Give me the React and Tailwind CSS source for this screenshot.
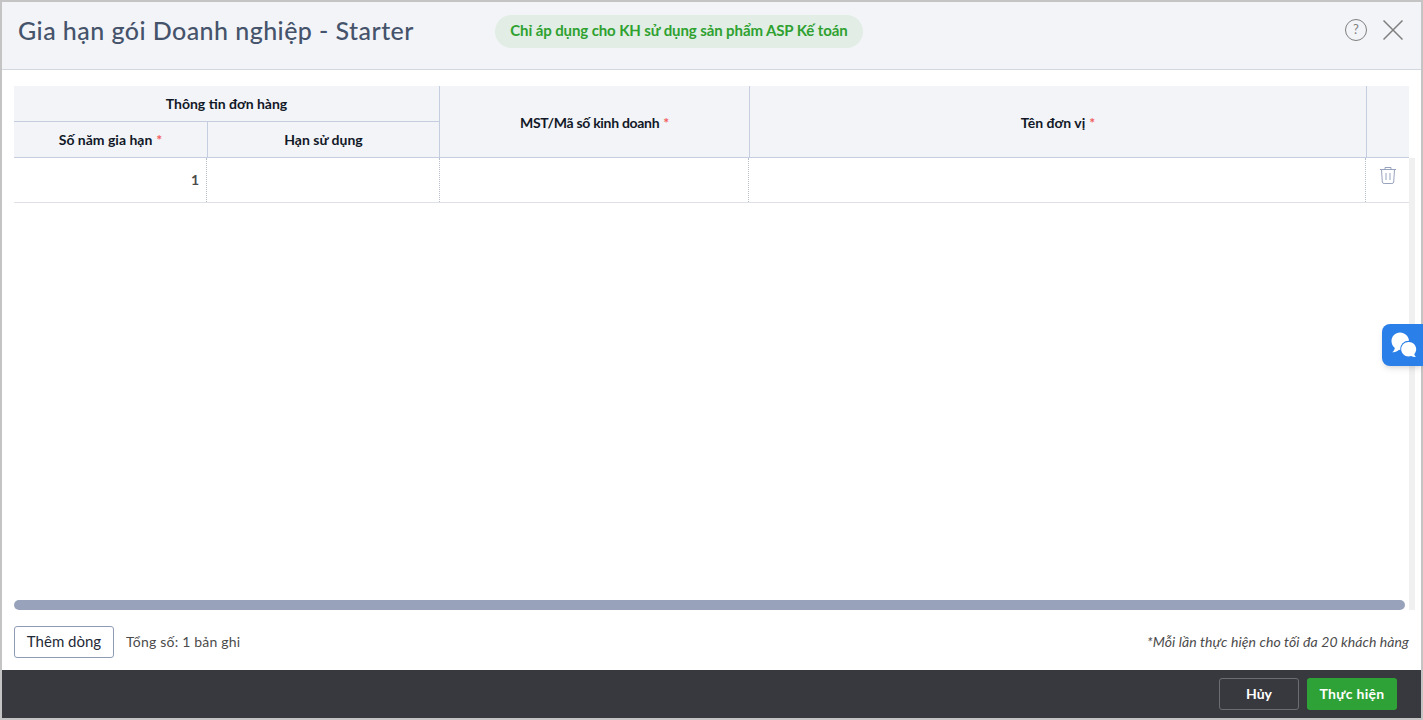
import React from 'react';

const headCell = "flex items-center justify-center bg-[#f3f4f8] border-r border-b border-[#c5cede] text-[14px] font-bold text-[#111827]";
const bodyCell = "border-r border-dotted border-[#b8bfcc]";

function Required() {
  return <span className="ml-1 text-[#f25c5c]">*</span>;
}

function TrashIcon() {
  return (
    <svg width="18" height="19" viewBox="0 0 18 19" fill="none" stroke="#97a3bd" strokeWidth="1">
      <path d="M1 3.500h16" />
      <path d="M6 3.500V1.500h6v2" />
      <path d="M2.500 3.500l.8 12.500a1.800 1.800 0 0 0 1.800 1.500h7.800a1.800 1.800 0 0 0 1.800-1.500l.8-12.500" />
      <path d="M7 7v7M11 7v7" />
    </svg>
  );
}

function ChatIcon() {
  return (
    <svg width="26" height="26" viewBox="0 0 26 26">
      <path fill="#fff" d="M9 0.500C4.300 0.500 0.500 4.300 0.500 9c0 2.900 1.300 5.300 3.300 6.900-.2 1.700-1.100 3.200-2.600 4.300 2.600.3 5-.4 6.800-2.400.7.200 1.300.2 2 .2 4.700 0 8-4.300 8-9S13.700 0.500 9 0.500z" />
      <circle cx="17.500" cy="17" r="8.300" fill="#2b7fe8" />
      <path fill="#fff" d="M17.500 10c-4 0-7.300 3.200-7.300 7.200s3.300 7.200 7.300 7.200c1 0 1.900-.2 2.700-.5 1.200.8 2.700 1.200 4.600 1-.9-.8-1.400-1.900-1.500-3 1.200-1.300 1.900-2.900 1.900-4.700 0-4-3.300-7.200-7.300-7.200z" />
    </svg>
  );
}

export default function App() {
  return (
    <div className="relative h-[720px] w-[1423px] overflow-hidden bg-[#c4c4c4] p-[2px] font-['Lato',sans-serif]">
      <div className="flex h-full flex-col bg-white">
        {/* header */}
        <div className="flex h-[68px] shrink-0 items-center border-b border-[#d3d7e0] bg-[#f3f4f8] pb-[10px] pl-[16px] pr-[18px]">
          <h1 className="text-[25px] font-medium tracking-[0.45px] text-[#45536b]">Gia hạn gói Doanh nghiệp - Starter</h1>
          <div className="ml-[81px] mt-[2px] flex h-[33px] w-[368px] items-center justify-center rounded-full bg-[#e1ede5] pb-[2px] text-[15px] font-bold tracking-[-0.1px] text-[#2ea12f]">
            Chỉ áp dụng cho KH sử dụng sản phẩm ASP Kế toán
          </div>
          <div className="ml-auto flex items-center gap-[16px] pb-[2px]">
            <div className="flex h-[22px] w-[22px] items-center justify-center rounded-full border-[1.5px] border-[#7f7f7f] text-[13px] text-[#7f7f7f]">?</div>
            <svg width="20" height="20" viewBox="0 0 20 20" stroke="#7f7f7f" strokeWidth="1.500">
              <path d="M0.500 0.500L19.500 19.500M19.500 0.500L0.500 19.500" />
            </svg>
          </div>
        </div>

        {/* table */}
        <div className="relative flex-1 pl-[12px] pr-[12px] pt-[16px]">
          <div className="grid h-[72px] grid-cols-[194px_232px_310px_617px_42px] grid-rows-[36px_36px]">
            <div className={`${headCell} col-span-2`}>Thông tin đơn hàng</div>
            <div className={`${headCell} row-span-2 pt-[2px] tracking-[-0.3px]`}>MST/Mã số kinh doanh<Required /></div>
            <div className={`${headCell} row-span-2 pt-[2px]`}>Tên đơn vị<Required /></div>
            <div className={`${headCell} row-span-2 border-r-0`} />
            <div className={headCell}>Số năm gia hạn<Required /></div>
            <div className={headCell}>Hạn sử dụng</div>
          </div>
          <div className="flex">
            <div className="grid h-[45px] w-[1395px] grid-cols-[193px_233px_309px_617px_43px] border-b border-[#dfe1e6] text-[14px] text-[#4b4b4b]">
              <div className={`${bodyCell} flex items-center justify-end pb-[2px] pr-[7px] font-bold`}>1</div>
              <div className={bodyCell} />
              <div className={bodyCell} />
              <div className={bodyCell} />
              <div className="flex justify-center pt-[8px]"><TrashIcon /></div>
            </div>
          </div>
          {/* scrollbars */}
          <div className="absolute bottom-[1px] right-[6px] top-[88px] w-[6px] bg-[#f0f0f0]" />
          <div className="absolute bottom-[1px] left-[12px] h-[10px] w-[1391px] rounded-full bg-[#98a3bb]" />
        </div>

        {/* bottom info */}
        <div className="flex h-[59px] shrink-0 items-start pl-[12px] pr-[12px] pt-[15px]">
          <button className="h-[32px] w-[100px] rounded-[3px] border border-[#8f9bb5] pb-[2px] text-[15px] text-[#1f2937]">Thêm dòng</button>
          <span className="ml-[12px] mt-[5px] text-[14px] tracking-[0.2px] text-[#4b4b4b]">Tổng số: 1 bản ghi</span>
          <span className="ml-auto mt-[5px] text-[14px] italic tracking-[0.1px] text-[#4b4b4b]">*Mỗi lần thực hiện cho tối đa 20 khách hàng</span>
        </div>

        {/* footer */}
        <div className="flex h-[48px] shrink-0 items-center justify-end gap-[8px] bg-[#38393e] pr-[24px]">
          <button className="h-[32px] w-[80px] rounded-[3px] border border-[#6b6d75] pb-[1px] text-[14px] font-bold text-white">Hủy</button>
          <button className="h-[32px] w-[90px] rounded-[3px] bg-[#2ea236] pb-[1px] text-[14px] font-bold tracking-[0.3px] text-white">Thực hiện</button>
        </div>
      </div>

      {/* chat bubble */}
      <div className="absolute right-0 top-[324px] flex h-[42px] w-[41px] items-center justify-center rounded-l-[8px] bg-[#2b7fe8] pl-[3px] shadow-md">
        <ChatIcon />
      </div>
    </div>
  );
}
